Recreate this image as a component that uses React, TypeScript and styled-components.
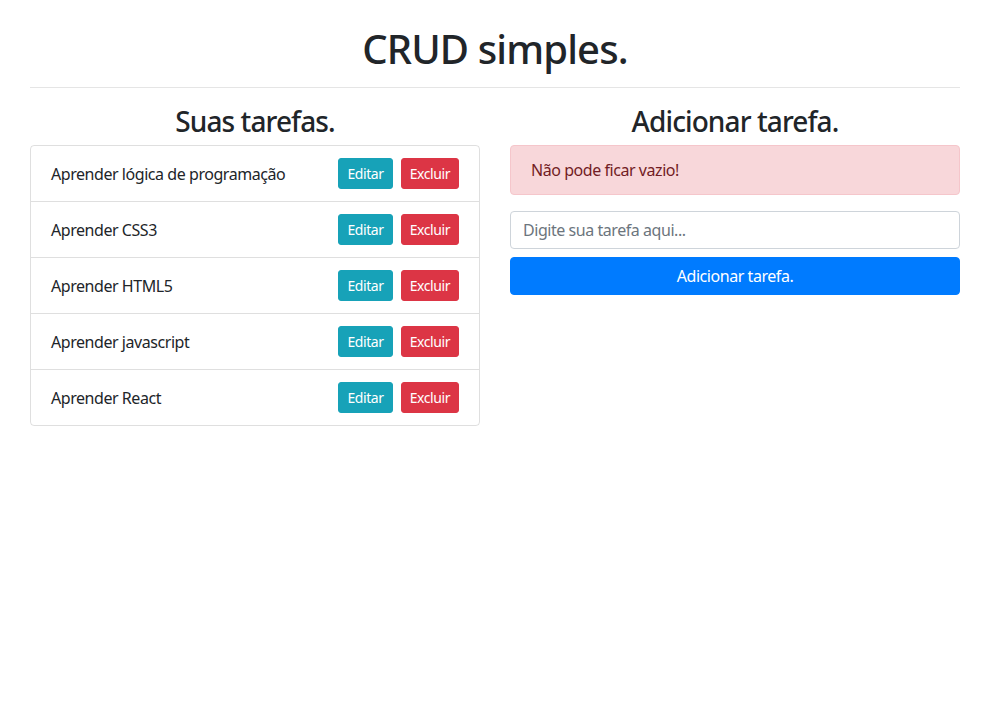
import React from "react";
import styled, { createGlobalStyle } from "styled-components";

const Global = createGlobalStyle`
  *, *::before, *::after { box-sizing: border-box; }
  body {
    margin: 0;
    background: #fff;
    color: #212529;
    font-family: "Noto Sans", "Open Sans", sans-serif;
    font-size: 16px;
    line-height: 1.5;
    letter-spacing: -0.028em;
  }
`;

const Page = styled.div`
  padding: 0 30px;
`;

const Title = styled.h1`
  margin: 25px 0 0;
  font-size: 40px;
  font-weight: 500;
  line-height: 1.2;
  text-align: center;
  letter-spacing: -0.022em;
`;

const Rule = styled.hr`
  margin: 14px 0 17px;
  border: 0;
  border-top: 1px solid rgba(0, 0, 0, 0.1);
`;

const Columns = styled.div`
  display: grid;
  grid-template-columns: 1fr 1fr;
  gap: 30px;
  align-items: start;
`;

const Column = styled.section`
  display: flex;
  flex-direction: column;
`;

const Heading = styled.h3`
  margin: 0 0 6px;
  font-size: 28px;
  font-weight: 500;
  line-height: 1.2;
  text-align: center;
  letter-spacing: -0.032em;
`;

const List = styled.ul`
  list-style: none;
  margin: 0;
  padding: 0;
  border: 1px solid rgba(0, 0, 0, 0.125);
  border-radius: 4px;
`;

const Item = styled.li`
  display: flex;
  align-items: center;
  justify-content: space-between;
  padding: 12px 20px;
  & + & {
    border-top: 1px solid rgba(0, 0, 0, 0.125);
  }
`;

const ItemText = styled.span`
  font-size: 16px;
  padding-top: 2px;
`;

const Actions = styled.div`
  display: flex;
  gap: 8px;
`;

const SmallButton = styled.button<{ $variant: "info" | "danger" }>`
  font-family: inherit;
  font-size: 14px;
  line-height: 21px;
  letter-spacing: -0.03em;
  padding: 4px 8px;
  border-radius: 3px;
  border: 1px solid ${(p) => (p.$variant === "info" ? "#17a2b8" : "#dc3545")};
  background: ${(p) => (p.$variant === "info" ? "#17a2b8" : "#dc3545")};
  color: #fff;
  cursor: pointer;
`;

const Alert = styled.div`
  padding: 12px 20px;
  margin-bottom: 16px;
  background: #f8d7da;
  border: 1px solid #f5c6cb;
  color: #721c24;
  border-radius: 4px;
  font-size: 16px;
  line-height: 24px;
`;

const Input = styled.input`
  display: block;
  width: 100%;
  height: 38px;
  padding: 6px 12px;
  font-family: inherit;
  font-size: 16px;
  line-height: 24px;
  letter-spacing: -0.028em;
  color: #495057;
  background: #fff;
  border: 1px solid #ced4da;
  border-radius: 4px;
  margin-bottom: 8px;
  &::placeholder { color: #6c757d; }
`;

const PrimaryButton = styled.button`
  display: block;
  width: 100%;
  padding: 6px 12px;
  font-family: inherit;
  font-size: 16px;
  line-height: 24px;
  letter-spacing: -0.028em;
  color: #fff;
  background: #007bff;
  border: 1px solid #007bff;
  border-radius: 4px;
  cursor: pointer;
`;

const tasks = [
  "Aprender lógica de programação",
  "Aprender CSS3",
  "Aprender HTML5",
  "Aprender javascript",
  "Aprender React",
];

export default function App() {
  return (
    <>
      <Global />
      <Page>
        <Title>CRUD simples.</Title>
        <Rule />
        <Columns>
          <Column>
            <Heading>Suas tarefas.</Heading>
            <List>
              {tasks.map((t) => (
                <Item key={t}>
                  <ItemText>{t}</ItemText>
                  <Actions>
                    <SmallButton $variant="info">Editar</SmallButton>
                    <SmallButton $variant="danger">Excluir</SmallButton>
                  </Actions>
                </Item>
              ))}
            </List>
          </Column>
          <Column>
            <Heading>Adicionar tarefa.</Heading>
            <Alert>Não pode ficar vazio!</Alert>
            <Input placeholder="Digite sua tarefa aqui..." />
            <PrimaryButton>Adicionar tarefa.</PrimaryButton>
          </Column>
        </Columns>
      </Page>
    </>
  );
}
